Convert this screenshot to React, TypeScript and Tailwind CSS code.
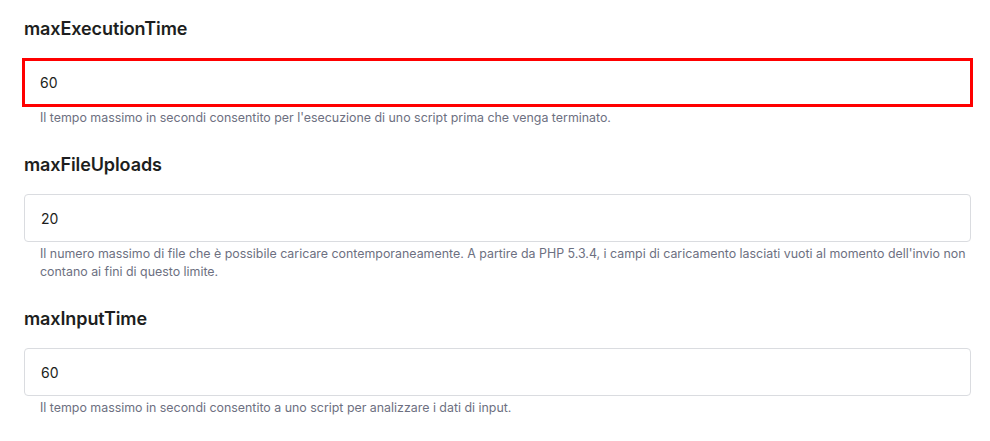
import clsx from 'clsx'

interface Field {
  name: string
  value: string
  hint: string
  highlighted?: boolean
}

const FIELDS: Field[] = [
  {
    name: 'maxExecutionTime',
    value: '60',
    hint: "Il tempo massimo in secondi consentito per l'esecuzione di uno script prima che venga terminato.",
    highlighted: true,
  },
  {
    name: 'maxFileUploads',
    value: '20',
    hint: "Il numero massimo di file che è possibile caricare contemporaneamente. A partire da PHP 5.3.4, i campi di caricamento lasciati vuoti al momento dell'invio non contano ai fini di questo limite.",
  },
  {
    name: 'maxInputTime',
    value: '60',
    hint: 'Il tempo massimo in secondi consentito a uno script per analizzare i dati di input.',
  },
]

export default function App() {
  return (
    <div
      className="min-h-[441px] w-[990px] bg-white pl-6 pr-[19px] pt-[17px] text-[#1d1e20]"
      style={{ fontFamily: 'Inter, "Noto Sans", sans-serif' }}
    >
      {FIELDS.map((field, i) => (
        <div key={field.name} className={clsx(i > 0 && 'mt-[26px]')}>
          <h3 className="text-[18px] leading-6 font-semibold tracking-[-0.1px]">{field.name}</h3>
          <div
            className={clsx(
              'mt-[17px]',
              field.highlighted && '-mx-[2px] -my-[1px] border-[3px] border-[#ff0000]'
            )}
          >
            <input
              readOnly
              value={field.value}
              className={clsx(
                'block h-12 w-full rounded px-4 text-[14px] text-[#1d1e20] outline-none',
                field.highlighted ? 'h-[43px] pl-[15px]' : 'border border-[#dadce0]'
              )}
            />
          </div>
          <p className="mt-[3px] pl-4 text-[12.4px] leading-[18px] text-[#6d7081]">{field.hint}</p>
        </div>
      ))}
    </div>
  )
}
